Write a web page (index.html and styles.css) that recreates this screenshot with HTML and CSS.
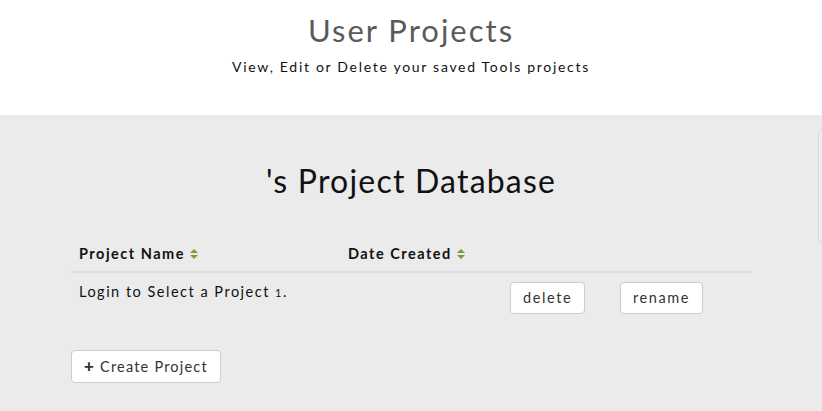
FILE: index.html
```html
<!DOCTYPE html>
<html>
<head>
<meta charset="utf-8">
<link rel="stylesheet" href="styles.css">
</head>
<body>
<header class="hero">
  <h1 class="hero-title">User Projects</h1>
  <p class="hero-sub">View, Edit or Delete your saved Tools projects</p>
</header>
<main class="panel">
  <div class="side-tab"></div>
  <h2 class="db-title">'s Project Database</h2>
  <table class="projects">
    <thead>
      <tr>
        <th class="c-name">Project Name <span class="sort"><svg width="8" height="12" viewBox="0 0 8 12"><path d="M0 5 L4 1 L8 5 Z" fill="#7f9a3c"/><path d="M0 7 L4 11 L8 7 Z" fill="#7f9a3c"/></svg></span></th>
        <th class="c-date">Date Created <span class="sort"><svg width="8" height="12" viewBox="0 0 8 12"><path d="M0 5 L4 1 L8 5 Z" fill="#7f9a3c"/><path d="M0 7 L4 11 L8 7 Z" fill="#7f9a3c"/></svg></span></th>
        <th class="c-del"></th>
        <th class="c-ren"></th>
      </tr>
    </thead>
    <tbody>
      <tr>
        <td>Login to Select a Project <span class="small">1</span>.</td>
        <td></td>
        <td><button class="btn">delete</button></td>
        <td><button class="btn">rename</button></td>
      </tr>
    </tbody>
  </table>
  <button class="btn btn-create"><span class="plus">+</span>Create Project</button>
</main>
</body>
</html>
```
FILE: styles.css
```css
html, body {
  margin: 0;
  padding: 0;
}
body {
  font-family: "Lato", "Open Sans", sans-serif;
  color: #111;
  background: #ebebeb;
  overflow: hidden;
  height: 411px;
}
.hero {
  background: #fff;
  height: 115px;
  text-align: center;
  box-sizing: border-box;
  padding-top: 10px;
}
.hero-title {
  margin: 0;
  font-weight: 400;
  font-size: 31px;
  letter-spacing: 2px;
  color: #5a5a5a;
  line-height: 40px;
}
.hero-sub {
  margin: 8px 0 0;
  font-size: 14px;
  letter-spacing: 1.7px;
  color: #111;
}
.panel {
  position: relative;
  padding: 44px 71px 0;
  height: 296px;
  box-sizing: border-box;
}
.side-tab {
  position: absolute;
  right: -10px;
  top: 14px;
  width: 12px;
  height: 113px;
  border: 1px solid #d8d8d8;
  border-radius: 4px;
  background: #ececec;
}
.db-title {
  margin: 0 0 33px;
  text-align: center;
  font-weight: 400;
  font-size: 32px;
  letter-spacing: 1.2px;
  line-height: 44px;
  color: #111;
}
.projects {
  width: 680px;
  border-collapse: collapse;
  font-size: 14.5px;
  letter-spacing: 1.5px;
}
.projects th {
  text-align: left;
  font-weight: 700;
  padding: 8px 8px 7px;
  border-bottom: 2px solid #dcdcdc;
  line-height: 20px;
}
.c-name { width: 253px; }
.c-date { width: 146px; }
.c-del { width: 94px; }
.projects td {
  padding: 9px 8px 8px;
  vertical-align: top;
  line-height: 20px;
}
.small { font-size: 11px; }
.sort svg { vertical-align: -1px; }
.btn {
  font-family: "Lato", "Open Sans", sans-serif;
  font-size: 14.5px;
  letter-spacing: 1.6px;
  color: #333;
  background: #fff;
  border: 1px solid #ccc;
  border-radius: 4px;
  padding: 0 12px;
  height: 32px;
  box-sizing: border-box;
  line-height: 30px;
  display: block;
}
.btn-create {
  margin-top: 28px;
  height: 33px;
  letter-spacing: 1.2px;
}
.plus {
  font-weight: 900;
  font-size: 17px;
  margin-right: 5px;
  color: #333;
}
```
